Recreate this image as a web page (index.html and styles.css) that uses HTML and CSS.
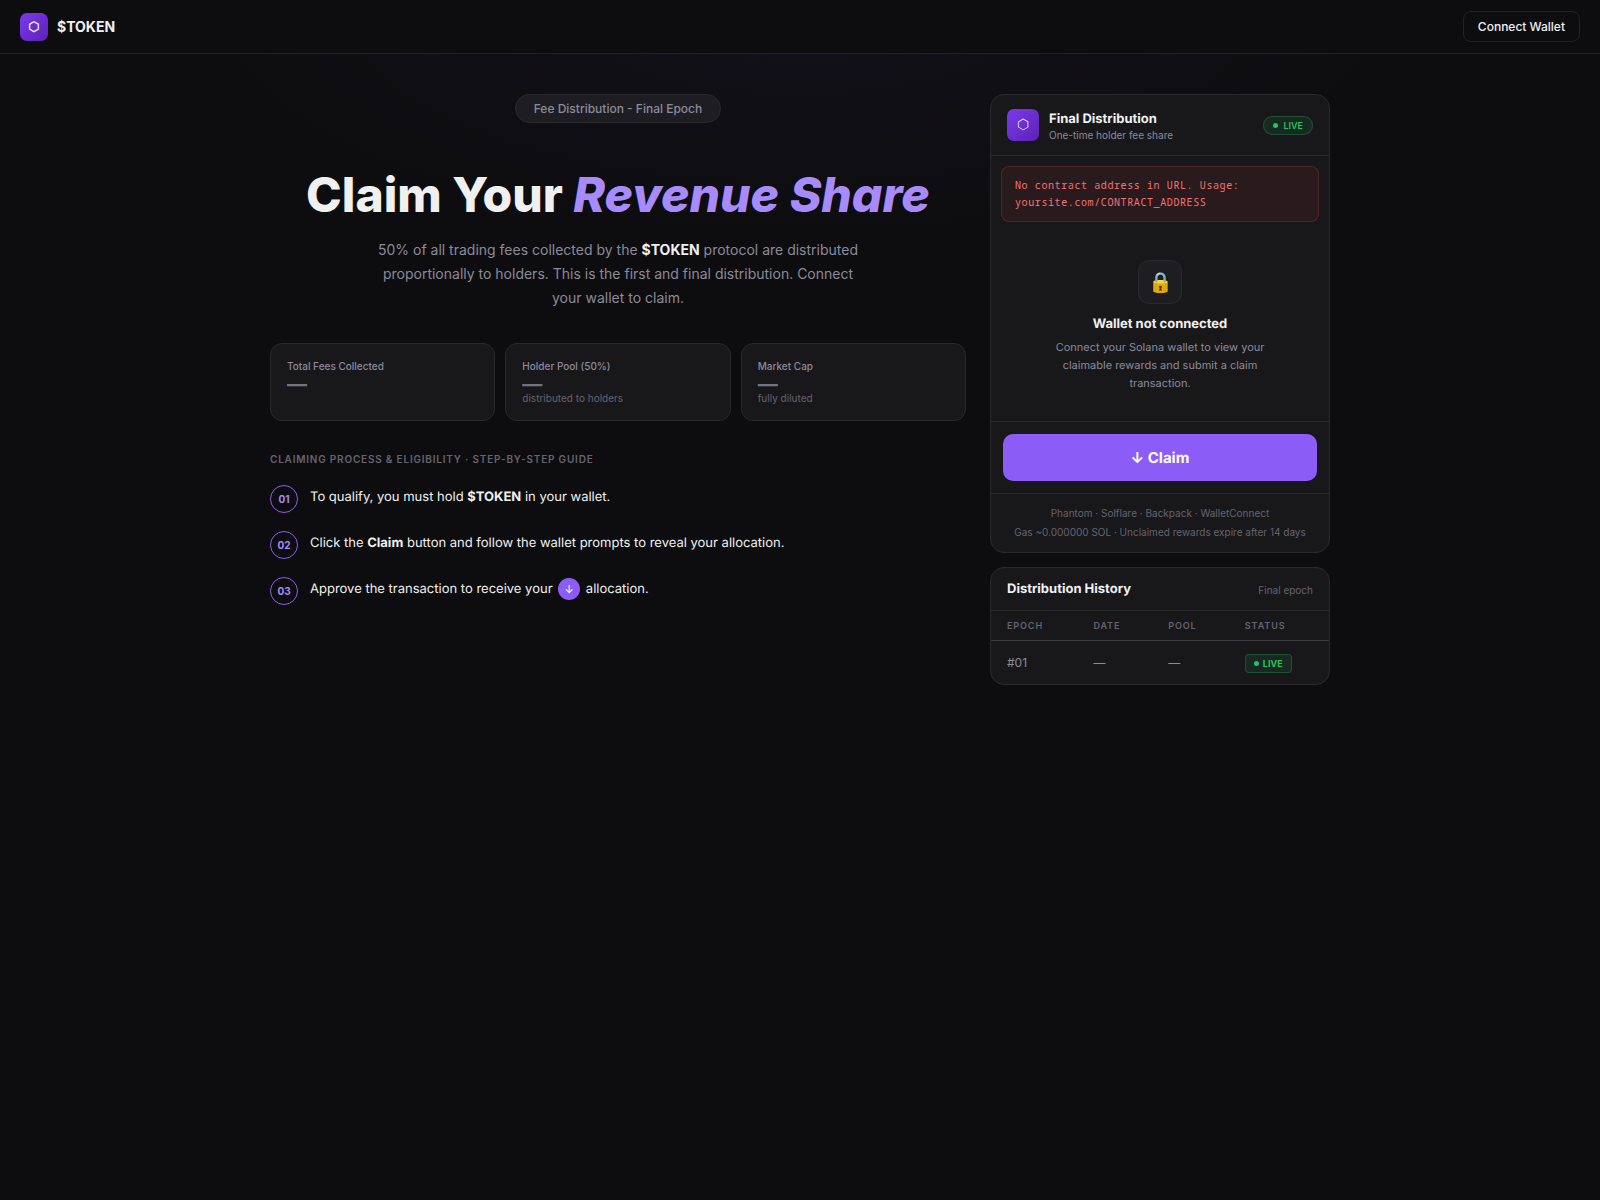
FILE: index.html
```html
<!DOCTYPE html>
<html lang="en">
<head>
<meta charset="utf-8">
<meta name="viewport" content="width=device-width, initial-scale=1">
<title>$TOKEN - Claim Your Revenue Share</title>
<link rel="stylesheet" href="styles.css">
</head>
<body>
<header class="topbar">
  <a class="brand" href="#"><span class="logo">⬡</span>$TOKEN</a>
  <button class="connect" type="button">Connect Wallet</button>
</header>
<main class="layout">
  <section class="intro">
    <div class="pill">Fee Distribution - Final Epoch</div>
    <h1 class="headline">Claim Your <em>Revenue Share</em></h1>
    <p class="lead">50% of all trading fees collected by the <strong>$TOKEN</strong> protocol are distributed proportionally to holders. This is the first and final distribution. Connect your wallet to claim.</p>
    <div class="stats">
      <div class="stat"><div class="stat-label">Total Fees Collected</div><div class="stat-value">—</div></div>
      <div class="stat"><div class="stat-label">Holder Pool (50%)</div><div class="stat-value">—</div><div class="stat-sub">distributed to holders</div></div>
      <div class="stat"><div class="stat-label">Market Cap</div><div class="stat-value">—</div><div class="stat-sub">fully diluted</div></div>
    </div>
    <h2 class="guide-title">Claiming Process &amp; Eligibility · Step-by-Step Guide</h2>
    <ol class="steps">
      <li class="step"><span class="step-num">01</span><p class="step-text">To qualify, you must hold <strong>$TOKEN</strong> in your wallet.</p></li>
      <li class="step"><span class="step-num">02</span><p class="step-text">Click the <strong>Claim</strong> button and follow the wallet prompts to reveal your allocation.</p></li>
      <li class="step"><span class="step-num">03</span><p class="step-text">Approve the transaction to receive your <span class="coin">↓</span> allocation.</p></li>
    </ol>
  </section>
  <aside class="side">
    <section class="card">
      <div class="card-head">
        <span class="logo logo-large">⬡</span>
        <div class="card-titles"><h2 class="card-title">Final Distribution</h2><div class="card-sub">One-time holder fee share</div></div>
        <span class="live live-round">LIVE</span>
      </div>
      <div class="alert" role="alert">No contract address in URL. Usage: yoursite.com/CONTRACT_ADDRESS</div>
      <div class="empty">
        <div class="lock">🔒</div>
        <h3 class="card-title">Wallet not connected</h3>
        <p class="empty-text">Connect your Solana wallet to view your claimable rewards and submit a claim transaction.</p>
      </div>
      <div class="action"><button class="claim" type="button">↓ Claim</button></div>
      <div class="notes">Phantom · Solflare · Backpack · WalletConnect<br>Gas ~0.000000 SOL · Unclaimed rewards expire after 14 days</div>
    </section>
    <section class="card">
      <div class="history-head"><h2 class="card-title">Distribution History</h2><span class="history-note">Final epoch</span></div>
      <table class="history">
        <thead><tr><th>Epoch</th><th>Date</th><th>Pool</th><th>Status</th></tr></thead>
        <tbody><tr><td>#01</td><td>—</td><td>—</td><td><span class="live">LIVE</span></td></tr></tbody>
      </table>
    </section>
  </aside>
</main>
</body>
</html>
```
FILE: styles.css
```css
:root {
  --bg: #0d0d0f;
  --surface: #18181b;
  --raised: #1e1e22;
  --line: #2a2a2e;
  --text: #f0f0f0;
  --muted: #8b8a9b;
  --faint: #65636f;
  --purple: #8b5cf6;
  --lilac: #a78bfa;
  --green: #22c55e;
}
* { box-sizing: border-box; margin: 0; padding: 0; }
body {
  min-height: 100vh;
  background: radial-gradient(ellipse 38% 240px at 50% 0, rgba(139, 92, 246, 0.05), transparent) no-repeat var(--bg);
  color: var(--text);
  font-family: Inter, "Liberation Sans", sans-serif;
  font-size: 14px;
  line-height: 20px;
}
button { font: inherit; cursor: pointer; }
.logo, .step-text, .card-title, .empty-text, .claim { text-rendering: geometricPrecision; }
.topbar {
  display: flex;
  align-items: center;
  justify-content: space-between;
  padding: 11px 20px;
  border-bottom: 1px solid #222226;
  background: var(--bg);
}
.brand {
  display: flex;
  align-items: center;
  gap: 9px;
  color: var(--text);
  font-weight: 700;
  text-decoration: none;
}
.logo {
  display: flex;
  align-items: center;
  justify-content: center;
  width: 28px;
  height: 28px;
  border-radius: 7px;
  background: linear-gradient(135deg, #7c3aed, #5b21b6);
  color: rgba(255, 255, 255, 0.9);
  font-size: 13px;
  font-weight: 700;
}
.logo-large { width: 32px; height: 32px; font-size: 14px; font-weight: 400; }
.connect {
  height: 31px;
  padding: 0 14px;
  border: 1px solid #222226;
  border-radius: 8px;
  background: transparent;
  color: var(--text);
  font-size: 12px;
  font-weight: 500;
}
.layout {
  display: grid;
  grid-template-columns: minmax(0, 1fr) 340px;
  gap: 24px;
  max-width: 1100px;
  margin: 0 auto;
  padding: 40px 20px;
}
.pill {
  width: fit-content;
  margin: 0 auto;
  padding: 4px 18px;
  border: 1px solid var(--line);
  border-radius: 16px;
  background: var(--raised);
  color: var(--muted);
  font-size: 12px;
  font-weight: 500;
  line-height: 19px;
}
.headline {
  margin: 44px 0 15px;
  font-size: 48px;
  font-weight: 800;
  line-height: 56px;
  text-align: center;
}
.headline em { color: var(--lilac); }
.lead {
  max-width: 480px;
  margin: 0 auto 33px;
  color: var(--muted);
  line-height: 24px;
  text-align: center;
}
.lead strong { color: var(--text); }
.stats { display: grid; grid-template-columns: repeat(3, 1fr); gap: 10px; }
.stat {
  padding: 16px;
  border: 1px solid var(--line);
  border-radius: 12px;
  background: var(--surface);
  font-size: 10px;
  line-height: 12px;
}
.stat-label { color: var(--muted); font-weight: 500; }
.stat-value { margin-top: 4px; color: #747282; font-size: 20px; font-weight: 700; line-height: 16px; }
.stat-sub { color: var(--faint); }
.guide-title {
  margin: 32px 0 20px;
  color: var(--faint);
  font-size: 10px;
  font-weight: 600;
  letter-spacing: 0.08em;
  line-height: 12px;
  text-transform: uppercase;
}
.steps { display: flex; flex-direction: column; gap: 18px; list-style: none; }
.step { display: flex; gap: 12px; font-size: 13px; line-height: 24px; }
.step-num {
  display: flex;
  flex: none;
  align-items: center;
  justify-content: center;
  width: 28px;
  height: 28px;
  border: 1px solid var(--purple);
  border-radius: 50%;
  color: var(--lilac);
  font-size: 10px;
  font-weight: 700;
}
.coin {
  display: inline-flex;
  align-items: center;
  justify-content: center;
  width: 22px;
  height: 22px;
  margin: 0 2px;
  border-radius: 50%;
  background: var(--purple);
  color: #fff;
  font-size: 11px;
  vertical-align: middle;
}
.side { display: flex; flex-direction: column; gap: 14px; }
.card {
  overflow: hidden;
  border: 1px solid var(--line);
  border-radius: 14px;
  background: var(--surface);
}
.card-head {
  display: flex;
  align-items: center;
  gap: 10px;
  padding: 14px 16px;
  border-bottom: 1px solid var(--line);
}
.card-titles { flex: 1; }
.card-title { font-size: 13px; font-weight: 700; line-height: 19px; }
.card-sub { color: var(--muted); font-size: 10px; line-height: 12px; }
.live {
  display: inline-flex;
  align-items: center;
  gap: 4px;
  padding: 0 8px;
  border: 1px solid rgba(34, 197, 94, 0.25);
  border-radius: 4px;
  background: rgba(34, 197, 94, 0.1);
  color: var(--green);
  font-size: 9px;
  font-weight: 700;
  line-height: 17px;
  vertical-align: middle;
}
.live::before {
  width: 5px;
  height: 5px;
  border-radius: 50%;
  background: currentColor;
  content: "";
}
.live-round { gap: 5px; padding: 0 9px; border-radius: 10px; font-weight: 600; }
.alert {
  margin: 10px 10px 0;
  padding: 10px 13px;
  border: 1px solid rgba(239, 68, 68, 0.2);
  border-radius: 8px;
  background: rgba(239, 68, 68, 0.08);
  color: #f87171;
  font-family: "Noto Sans Mono", "DejaVu Sans Mono", monospace;
  font-size: 10px;
  letter-spacing: 0.06em;
  line-height: 17px;
}
.empty {
  display: flex;
  flex-direction: column;
  align-items: center;
  padding: 38px 20px 29px;
  text-align: center;
}
.lock {
  display: flex;
  align-items: center;
  justify-content: center;
  width: 44px;
  height: 44px;
  margin-bottom: 11px;
  border: 1px solid var(--line);
  border-radius: 11px;
  background: var(--raised);
  font-size: 20px;
}
.empty-text { max-width: 220px; margin-top: 4px; color: var(--muted); font-size: 11px; line-height: 18px; }
.action { padding: 12px; border-top: 1px solid var(--line); border-bottom: 1px solid var(--line); }
.claim {
  width: 100%;
  height: 47px;
  border: 0;
  border-radius: 10px;
  background: var(--purple);
  color: #fff;
  font-size: 15px;
  font-weight: 700;
}
.notes { padding: 10px 16px; color: var(--faint); font-size: 10px; line-height: 19px; text-align: center; }
.history-head {
  display: flex;
  align-items: center;
  justify-content: space-between;
  padding: 12px 16px 11px;
  border-bottom: 1px solid var(--line);
}
.history-note { color: var(--faint); font-size: 10px; line-height: 16px; }
.history { width: 100%; border-collapse: collapse; text-align: left; }
.history th {
  padding: 9px 16px;
  border-bottom: 1px solid #3a3a40;
  color: var(--faint);
  font-size: 9px;
  font-weight: 600;
  letter-spacing: 0.1em;
  line-height: 11px;
  text-transform: uppercase;
}
.history td { padding: 11px 16px; color: var(--muted); font-size: 12px; line-height: 21px; }
```
